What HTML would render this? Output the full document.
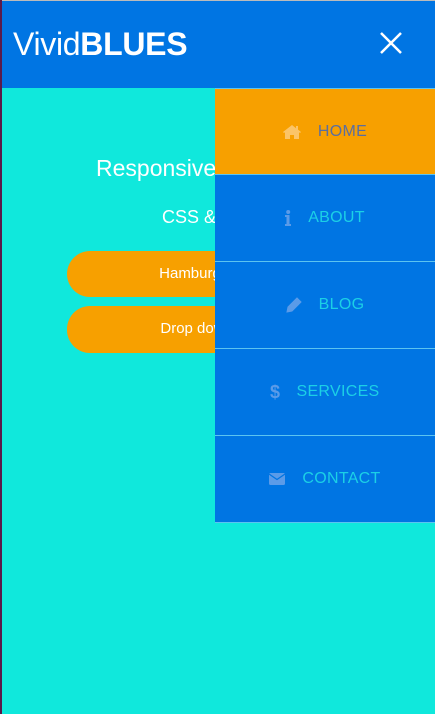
<!DOCTYPE html>
<html><head><meta charset="utf-8"><style>
*{margin:0;padding:0;box-sizing:border-box}
body{width:435px;height:714px;overflow:hidden;background:#10E8DC;font-family:"Liberation Sans",sans-serif;position:relative}
.lb{position:absolute;left:0;top:0;width:2px;height:714px;background:#5a1a4a}
.tb{position:absolute;left:0;top:0;width:435px;height:1px;background:#bbb}
header{position:absolute;left:2px;top:1px;width:433px;height:87px;background:#0075E3}
.logo{position:absolute;left:11px;top:25px;color:#fff;font-size:32px;letter-spacing:-0.3px}
.logo b{font-weight:700}
.x{position:absolute;left:378px;top:31px}
.h1{position:absolute;left:96px;top:155px;color:#fff;font-size:23px;white-space:nowrap}
.h2{position:absolute;left:162px;top:207px;color:#fff;font-size:18px;white-space:nowrap}
.btn{position:absolute;left:67px;width:301px;height:46px;border-radius:23px;background:#F7A000;color:#fff;font-size:15px;text-align:center;line-height:46px}
.menu{position:absolute;left:215px;top:88px;width:220px;border-top:1px solid #5cc4f0}
.it{height:87px;border-bottom:1px solid #5cc4f0;background:#0075E3;display:flex;align-items:center;justify-content:center;font-size:16px;color:#1BD0E6;letter-spacing:.3px}
.it svg{margin-right:17px}
.it.home{background:#F7A000;color:#5a6ea0;height:86px}
</style></head><body>
<div class="tb"></div>
<header><div class="logo">Vivid<b>BLUES</b></div>
<svg class="x" width="22" height="22" viewBox="0 0 22 22"><path d="M1 1L21 21M21 1L1 21" stroke="#fff" stroke-width="2.5"/></svg></header>
<div class="lb"></div>
<div class="h1">Responsive Navigation</div>
<div class="h2">CSS &amp; jQuery</div>
<div class="btn" style="top:251px">Hamburger Menu</div>
<div class="btn" style="top:306px;height:47px">Drop down menu</div>
<div class="menu">
<div class="it home"><svg width="18" height="14" viewBox="0 0 18 14"><path d="M9 0L0 7l1 1 1-.8V14h5V10h4v4h5V7.2l1 .8 1-1-3-2.4V1h-2v2.2z" fill="#fbc467"/></svg>HOME</div>
<div class="it"><svg width="6" height="16" viewBox="0 0 6 16"><circle cx="3.2" cy="2" r="2" fill="#5b9be8"/><path d="M0 5h4.5v9H6v2H0v-2h1.5V7H0z" fill="#5b9be8"/></svg>ABOUT</div>
<div class="it"><svg width="16" height="16" viewBox="0 0 16 16"><path d="M11 1l4 4-9 9-5 1 1-5zM10 4l2 2" fill="#5b9be8" stroke="#5b9be8"/></svg>BLOG</div>
<div class="it"><svg width="10" height="18" viewBox="0 0 10 18" style="margin-right:16px"><text x="0" y="15" font-family="Liberation Sans" font-weight="700" font-size="18" fill="#5b9be8">$</text></svg>SERVICES</div>
<div class="it"><svg width="16" height="12" viewBox="0 0 16 12"><rect width="16" height="12" rx="1.5" fill="#5b9be8"/><path d="M0 1l8 5.5L16 1" stroke="#0075E3" stroke-width="1.3" fill="none"/></svg>CONTACT</div>
</div>
</body></html>
